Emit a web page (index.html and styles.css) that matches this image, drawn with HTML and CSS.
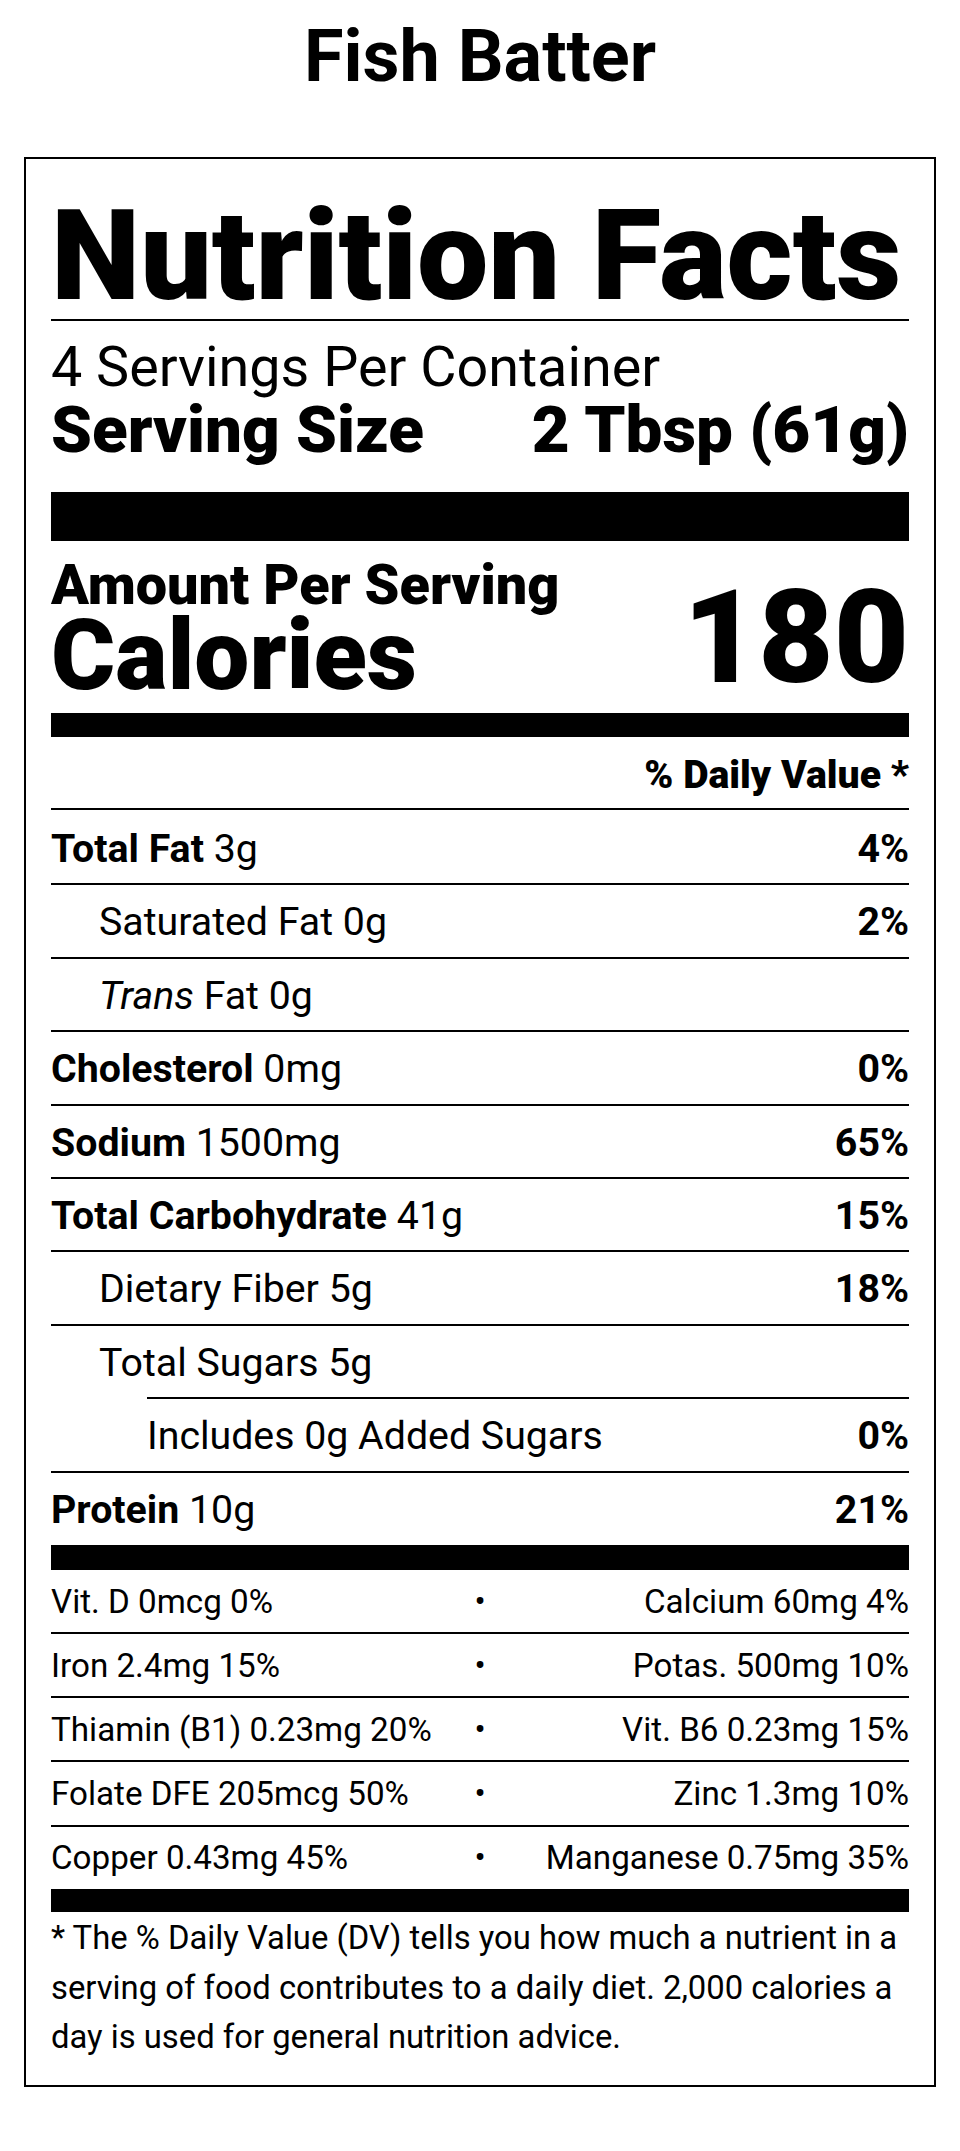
FILE: index.html
```html
<!DOCTYPE html>
<html lang="en">
<head>
<meta charset="utf-8">
<title>Fish Batter - Nutrition Facts</title>
<link rel="stylesheet" href="styles.css">
</head>
<body>
<h1 class="title">Fish Batter</h1>
<section class="label">
  <div class="nf">Nutrition Facts</div>
  <div class="servings">4 Servings Per Container</div>
  <div class="serving-size"><span>Serving Size</span><span>2 Tbsp (61g)</span></div>
  <div class="bar bar-lg"></div>
  <div class="calories">
    <div class="cal-left">
      <div class="amount">Amount Per Serving</div>
      <div class="cal-word">Calories</div>
    </div>
    <div class="cal-num">180</div>
  </div>
  <div class="bar bar-md"></div>
  <div class="dv-head">% Daily Value *</div>

  <div class="row first"><span><b>Total Fat</b> 3g</span><b>4%</b></div>
  <div class="row indent"><span>Saturated Fat 0g</span><b>2%</b></div>
  <div class="row indent"><span><i>Trans</i> Fat 0g</span></div>
  <div class="row"><span><b>Cholesterol</b> 0mg</span><b>0%</b></div>
  <div class="row"><span><b>Sodium</b> 1500mg</span><b>65%</b></div>
  <div class="row"><span><b>Total Carbohydrate</b> 41g</span><b>15%</b></div>
  <div class="row indent"><span>Dietary Fiber 5g</span><b>18%</b></div>
  <div class="row indent"><span>Total Sugars 5g</span></div>
  <div class="row indent2"><span>Includes 0g Added Sugars</span><b>0%</b></div>
  <div class="row"><span><b>Protein</b> 10g</span><b>21%</b></div>

  <div class="bar bar-protein"></div>

  <div class="vit-row first"><span>Vit. D 0mcg 0%</span><span class="dot">•</span><span class="vr">Calcium 60mg 4%</span></div>
  <div class="vit-row"><span>Iron 2.4mg 15%</span><span class="dot">•</span><span class="vr">Potas. 500mg 10%</span></div>
  <div class="vit-row"><span>Thiamin (B1) 0.23mg 20%</span><span class="dot">•</span><span class="vr">Vit. B6 0.23mg 15%</span></div>
  <div class="vit-row"><span>Folate DFE 205mcg 50%</span><span class="dot">•</span><span class="vr">Zinc 1.3mg 10%</span></div>
  <div class="vit-row"><span>Copper 0.43mg 45%</span><span class="dot">•</span><span class="vr">Manganese 0.75mg 35%</span></div>

  <div class="bar bar-sm"></div>
  <p class="foot">* The % Daily Value (DV) tells you how much a nutrient in a serving of food contributes to a daily diet. 2,000 calories a day is used for general nutrition advice.</p>
</section>
</body>
</html>
```

FILE: styles.css
```css
html, body {
  margin: 0;
  padding: 0;
  background: #fff;
  color: #000;
  font-family: Roboto, "Liberation Sans", Arial, sans-serif;
}

.title {
  margin: 0 0 64px;
  padding-top: 21px;
  font-size: 72px;
  line-height: 72px;
  font-weight: 700;
  text-align: center;
}

.label {
  box-sizing: border-box;
  width: 912px;
  margin: 0 auto;
  border: 2px solid #000;
  padding: 34px 25px 23px;
}

.nf {
  font-size: 127px;
  line-height: 126px;
  font-weight: 900;
  border-bottom: 2px solid #000;
  white-space: nowrap;
}

.servings {
  margin-top: 18px;
  font-size: 55.7px;
  line-height: 57px;
  font-weight: 400;
}

.serving-size {
  display: flex;
  justify-content: space-between;
  margin-top: 2px;
  font-size: 65.5px;
  line-height: 64px;
  font-weight: 900;
}

.bar {
  background: #000;
}

.bar-lg {
  height: 49px;
  margin-top: 30px;
}

.calories {
  display: flex;
  justify-content: space-between;
  align-items: flex-start;
}

.cal-left {
  padding-top: 19px;
}

.amount {
  font-size: 55.8px;
  line-height: 50px;
  font-weight: 900;
}

.cal-word {
  font-size: 98px;
  line-height: 92px;
  font-weight: 900;
}

.cal-num {
  padding-top: 31.5px;
  font-size: 130px;
  line-height: 130px;
  font-weight: 900;
}

.bar-md {
  height: 24px;
  margin-top: 10.5px;
}

.dv-head {
  padding: 19px 0 14px;
  border-bottom: 2px solid #000;
  text-align: right;
  font-size: 39.2px;
  line-height: 38px;
  font-weight: 900;
}

.row {
  display: flex;
  justify-content: space-between;
  padding: 13px 0 10.4px;
  border-top: 2px solid #000;
  font-size: 39.3px;
  line-height: 48px;
}

.row.first {
  border-top: 0;
  padding-top: 15px;
}

.row b {
  font-weight: 700;
}

.row i {
  font-style: italic;
}

.row.indent {
  padding-left: 48px;
}

.row.indent2 {
  margin-left: 96px;
}

.bar-protein {
  height: 25px;
  margin-top: 1px;
}

.vit-row {
  display: grid;
  grid-template-columns: 1fr auto 1fr;
  padding: 11.6px 0 10.6px;
  border-top: 2px solid #000;
  font-size: 33.2px;
  line-height: 40px;
}

.vit-row.first {
  border-top: 0;
}

.vit-row .dot {
  text-align: center;
}

.vit-row .vr {
  text-align: right;
}

.bar-sm {
  height: 23px;
}

.foot {
  margin: 0;
  padding-top: 2.5px;
  font-size: 32.8px;
  line-height: 49.2px;
}
```
